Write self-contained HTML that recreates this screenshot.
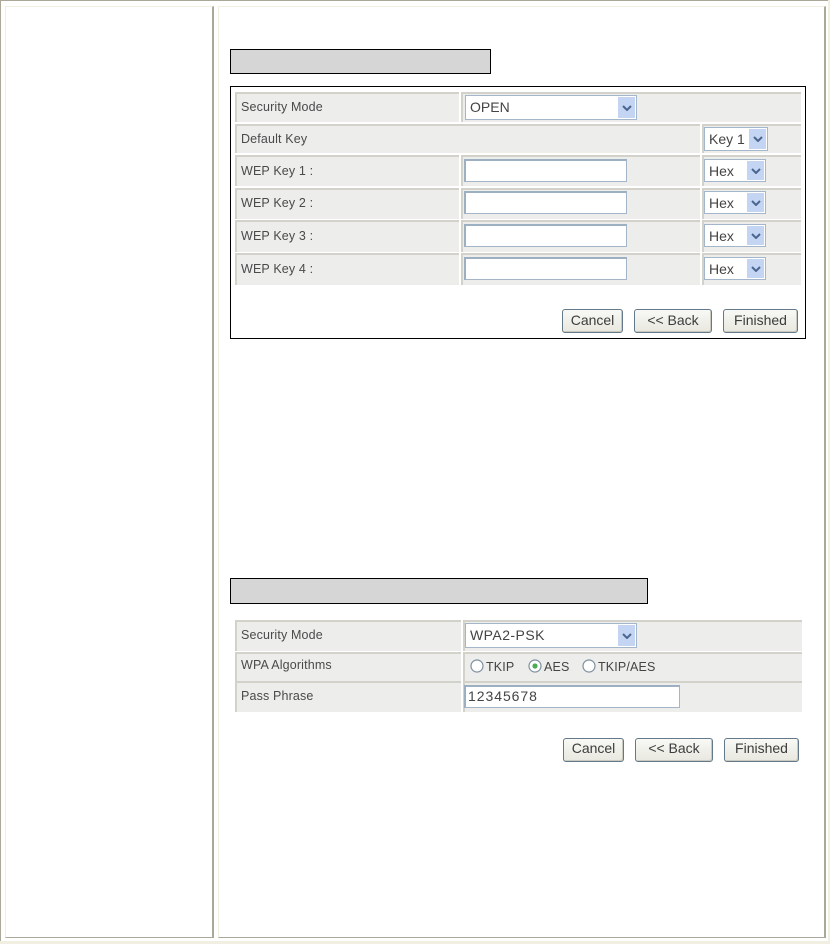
<!DOCTYPE html>
<html>
<head>
<meta charset="utf-8">
<style>
html,body{margin:0;padding:0;background:#fff;}
#p{position:relative;width:830px;height:944px;overflow:hidden;background:#fff;font-family:"Liberation Sans",sans-serif;color:#444;font-size:12px;filter:blur(.3px);}
#p div,#p svg{position:absolute;box-sizing:border-box;}
.c{background:#ededeb;border-top:2px solid #d2d2ca;border-left:2px solid #d2d2ca;}
.l{font-size:12.5px;letter-spacing:.15px;line-height:14px;color:#4a4a4a;white-space:pre;}
.i{background:#fff;border:1px solid #a3b5c6;border-top:2px solid #9db0c2;border-left:2px solid #9db0c2;}
.s{background:#fff;border:1px solid #a3b6ca;font-size:14px;line-height:20px;color:#444;padding-left:4px;white-space:pre;}
.a{background:#c3d5f3;width:17px;top:1px;bottom:1px;right:1px;}
.a svg{left:4px;top:50%;margin-top:-3px;}
.b{background:linear-gradient(#f8f8f5,#e8e8e0);border:1px solid #64798a;border-radius:3px;box-shadow:inset -1px -1px 0 #c9c9c0;color:#3c3c3c;font-size:14px;line-height:21px;text-align:center;white-space:pre;}
.t{background:#d6d6d6;border:1px solid #000;}
.r{color:#444;font-size:12.5px;letter-spacing:.15px;line-height:14px;white-space:pre;}
</style>
</head>
<body>
<div id="p">
<!-- frame -->
<div style="left:0;top:0;width:830px;height:1px;background:#aca899"></div>
<div style="left:0;top:0;width:1px;height:944px;background:#aca899"></div>
<div style="left:828px;top:0;width:2px;height:944px;background:#f1efe2"></div>
<div style="left:0;top:941px;width:830px;height:3px;background:#f1efe2"></div>
<!-- left panel -->
<div style="left:5px;top:6px;width:209px;height:932px;border-top:1px solid #f1efe2;border-left:1px solid #f1efe2;border-right:2px solid #aca899;border-bottom:1px solid #aca899"></div>
<!-- right panel -->
<div style="left:218px;top:6px;width:608px;height:932px;border-top:1px solid #f1efe2;border-left:1px solid #f1efe2;border-right:2px solid #aca899;border-bottom:1px solid #aca899"></div>

<!-- section 1 -->
<div class="t" style="left:230px;top:49px;width:261px;height:25px"></div>
<div style="left:230px;top:86px;width:576px;height:253px;border:1px solid #000"></div>

<div class="c" style="left:235px;top:92px;width:224px;height:30px"></div>
<div class="c" style="left:461px;top:92px;width:340px;height:30px"></div>
<div class="c" style="left:235px;top:124px;width:465px;height:29px"></div>
<div class="c" style="left:702px;top:124px;width:99px;height:29px"></div>
<div class="c" style="left:235px;top:155px;width:224px;height:31px"></div>
<div class="c" style="left:461px;top:155px;width:239px;height:31px"></div>
<div class="c" style="left:702px;top:155px;width:99px;height:31px"></div>
<div class="c" style="left:235px;top:188px;width:224px;height:31px"></div>
<div class="c" style="left:461px;top:188px;width:239px;height:31px"></div>
<div class="c" style="left:702px;top:188px;width:99px;height:31px"></div>
<div class="c" style="left:235px;top:220px;width:224px;height:32px"></div>
<div class="c" style="left:461px;top:220px;width:239px;height:32px"></div>
<div class="c" style="left:702px;top:220px;width:99px;height:32px"></div>
<div class="c" style="left:235px;top:253px;width:224px;height:32px"></div>
<div class="c" style="left:461px;top:253px;width:239px;height:32px"></div>
<div class="c" style="left:702px;top:253px;width:99px;height:32px"></div>

<div class="l" style="left:241px;top:100px">Security Mode</div>
<div class="l" style="left:241px;top:132px">Default Key</div>
<div class="l" style="left:241px;top:164px">WEP Key 1 :</div>
<div class="l" style="left:241px;top:196px">WEP Key 2 :</div>
<div class="l" style="left:241px;top:229px">WEP Key 3 :</div>
<div class="l" style="left:241px;top:262px">WEP Key 4 :</div>

<div class="s" style="left:465px;top:95px;width:172px;height:25px;line-height:22px">OPEN<div class="a"><svg width="10" height="6" viewBox="0 0 10 6"><path d="M1 1L5 5L9 1" fill="none" stroke="#4a6590" stroke-width="2"/></svg></div></div>
<div class="s" style="left:704px;top:127px;width:64px;height:24px;line-height:22px">Key 1<div class="a"><svg width="10" height="6" viewBox="0 0 10 6"><path d="M1 1L5 5L9 1" fill="none" stroke="#4a6590" stroke-width="2"/></svg></div></div>

<div class="i" style="left:464px;top:159px;width:163px;height:23px"></div>
<div class="i" style="left:464px;top:191px;width:163px;height:23px"></div>
<div class="i" style="left:464px;top:224px;width:163px;height:23px"></div>
<div class="i" style="left:464px;top:257px;width:163px;height:23px"></div>

<div class="s" style="left:704px;top:159px;width:62px;height:23px;line-height:22px">Hex<div class="a"><svg width="10" height="6" viewBox="0 0 10 6"><path d="M1 1L5 5L9 1" fill="none" stroke="#4a6590" stroke-width="2"/></svg></div></div>
<div class="s" style="left:704px;top:191px;width:62px;height:23px;line-height:22px">Hex<div class="a"><svg width="10" height="6" viewBox="0 0 10 6"><path d="M1 1L5 5L9 1" fill="none" stroke="#4a6590" stroke-width="2"/></svg></div></div>
<div class="s" style="left:704px;top:224px;width:62px;height:23px;line-height:22px">Hex<div class="a"><svg width="10" height="6" viewBox="0 0 10 6"><path d="M1 1L5 5L9 1" fill="none" stroke="#4a6590" stroke-width="2"/></svg></div></div>
<div class="s" style="left:704px;top:257px;width:62px;height:23px;line-height:22px">Hex<div class="a"><svg width="10" height="6" viewBox="0 0 10 6"><path d="M1 1L5 5L9 1" fill="none" stroke="#4a6590" stroke-width="2"/></svg></div></div>

<div class="b" style="left:562px;top:309px;width:61px;height:24px">Cancel</div>
<div class="b" style="left:634px;top:309px;width:78px;height:24px">&lt;&lt; Back</div>
<div class="b" style="left:723px;top:309px;width:75px;height:24px">Finished</div>

<!-- section 2 -->
<div class="t" style="left:230px;top:578px;width:418px;height:26px"></div>

<div class="c" style="left:235px;top:620px;width:226px;height:31px"></div>
<div class="c" style="left:463px;top:620px;width:339px;height:31px"></div>
<div class="c" style="left:235px;top:652px;width:226px;height:29px"></div>
<div class="c" style="left:463px;top:652px;width:339px;height:29px"></div>
<div class="c" style="left:235px;top:681px;width:226px;height:31px"></div>
<div class="c" style="left:463px;top:681px;width:339px;height:31px"></div>

<div class="l" style="left:241px;top:628px">Security Mode</div>
<div class="l" style="left:241px;top:658px">WPA Algorithms</div>
<div class="l" style="left:241px;top:689px">Pass Phrase</div>

<div class="s" style="left:465px;top:623px;width:172px;height:25px;line-height:23px;letter-spacing:.45px">WPA2-PSK<div class="a"><svg width="10" height="6" viewBox="0 0 10 6"><path d="M1 1L5 5L9 1" fill="none" stroke="#4a6590" stroke-width="2"/></svg></div></div>

<svg style="left:469px;top:658px" width="16" height="16" viewBox="0 0 16 16"><circle cx="8" cy="8" r="6" fill="#fff" stroke="#7d90a0" stroke-width="1.2"/></svg>
<div class="r" style="left:486px;top:660px">TKIP</div>
<svg style="left:527px;top:658px" width="16" height="16" viewBox="0 0 16 16"><circle cx="8" cy="8" r="6" fill="#fff" stroke="#7d90a0" stroke-width="1.2"/><circle cx="8" cy="8" r="2.6" fill="#4cab55"/></svg>
<div class="r" style="left:544px;top:660px">AES</div>
<svg style="left:581px;top:658px" width="16" height="16" viewBox="0 0 16 16"><circle cx="8" cy="8" r="6" fill="#fff" stroke="#7d90a0" stroke-width="1.2"/></svg>
<div class="r" style="left:598px;top:660px">TKIP/AES</div>

<div class="i" style="left:464px;top:685px;width:216px;height:23px;font-size:14px;letter-spacing:.95px;line-height:19px;color:#444;padding-left:2px">12345678</div>

<div class="b" style="left:563px;top:738px;width:61px;height:24px;line-height:19px">Cancel</div>
<div class="b" style="left:635px;top:738px;width:78px;height:24px;line-height:19px">&lt;&lt; Back</div>
<div class="b" style="left:724px;top:738px;width:75px;height:24px;line-height:19px">Finished</div>
</div>
</body>
</html>
